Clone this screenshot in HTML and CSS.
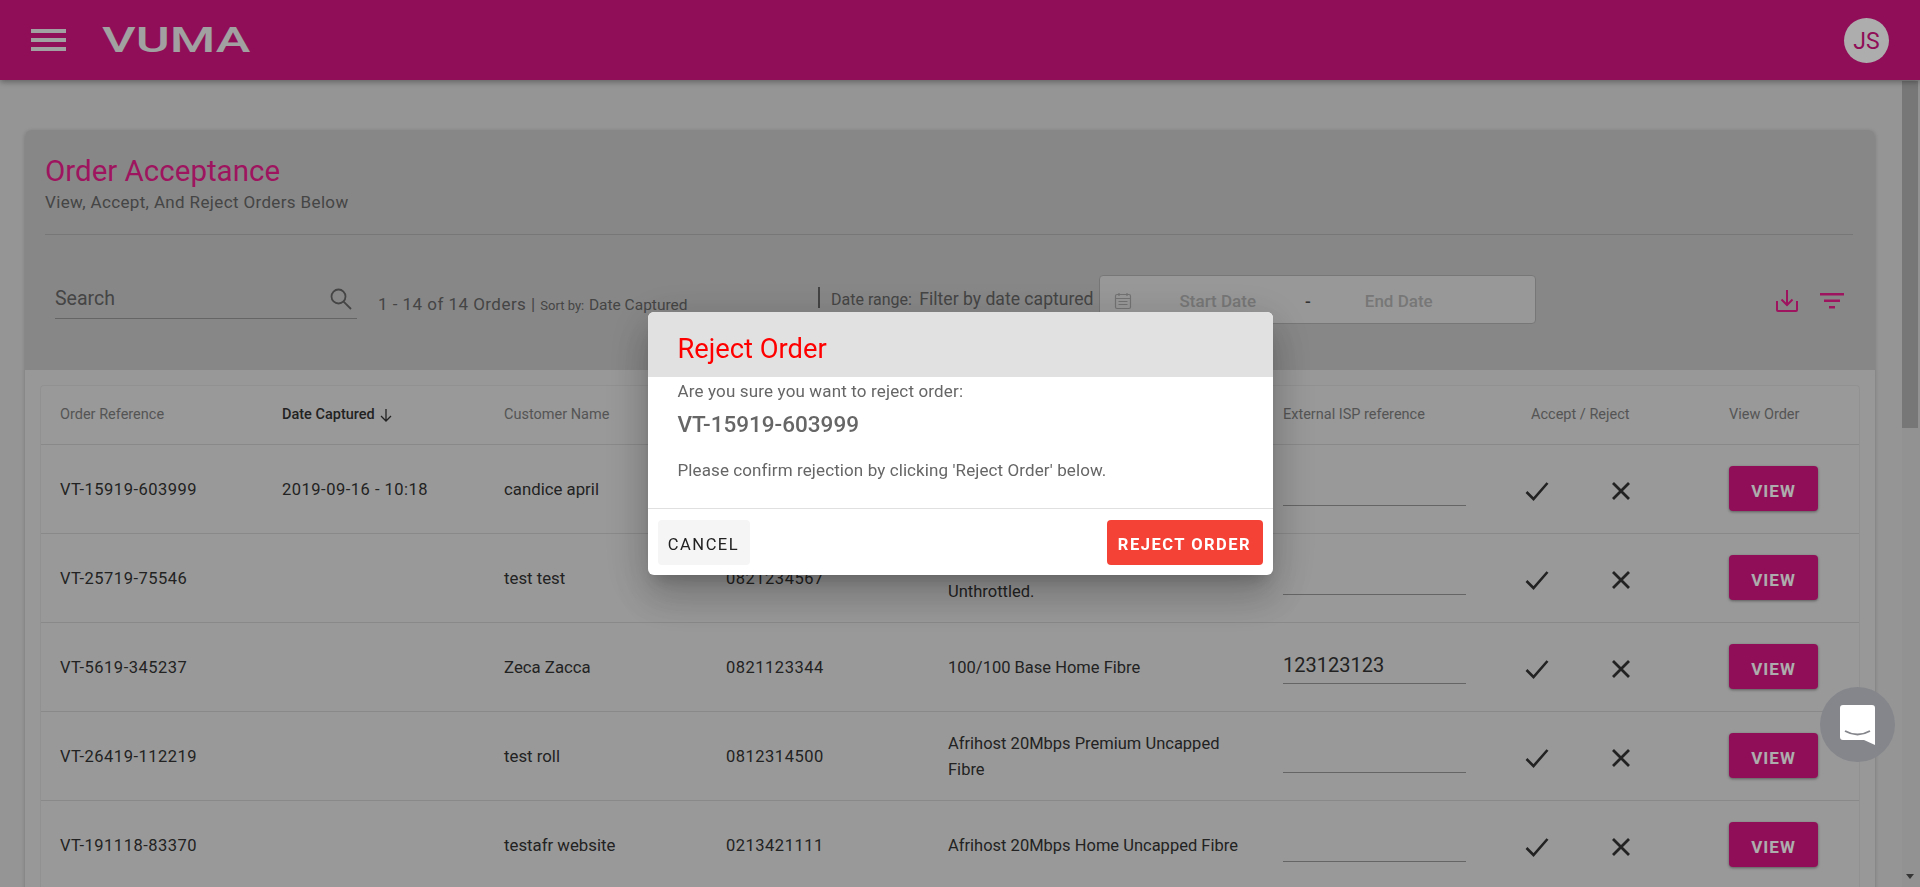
FILE: index.html
```html
<!DOCTYPE html>
<html lang="en">
<head>
    <meta charset="UTF-8">
    <meta name="viewport" content="width=device-width, initial-scale=1.0">
    <title>Order Acceptance</title>
    <link rel="stylesheet" href="styles.css">
</head>
<body>
    <header class="topbar">
        <div class="menu-icon"><span></span><span></span><span></span></div>
        <div class="logo"><span>VUMA</span></div>
        <div class="avatar">JS</div>
    </header>

    <div class="layout">
        <main class="content">
            <section class="card">
                <div class="card-head">
                    <h1>Order Acceptance</h1>
                    <p class="subtitle">View, Accept, And Reject Orders Below</p>
                    <div class="toolbar">
                        <div class="search">
                            <span>Search</span>
                            <svg width="24" height="24" viewBox="0 0 24 24" fill="none" stroke="#666" stroke-width="1.8"><circle cx="9.5" cy="9.5" r="7"/><path d="M14.6 14.6 22 22"/></svg>
                        </div>
                        <div class="count">1 - 14 of 14 Orders | <small>Sort by:</small> <span class="sort">Date Captured</span></div>
                        <div class="range"><small>Date range:</small> <span>Filter by date captured</span></div>
                        <div class="dates">
                            <svg width="18" height="18" viewBox="0 0 18 18" fill="none" stroke="#aaa" stroke-width="1.2"><rect x="1.5" y="2.5" width="15" height="14" rx="1.5"/><path d="M1.5 6.5h15M5 1v3M13 1v3M4.5 9.5h9M4.5 12.5h9"/></svg>
                            <span class="date-start">Start Date</span>
                            <span class="date-dash">-</span>
                            <span class="date-end">End Date</span>
                        </div>
                        <div class="tools">
                            <svg width="24" height="24" viewBox="0 0 24 24" fill="none" stroke="#e91e8c" stroke-width="2"><path d="M12 1v15M6.5 10.500 12 16l5.500-5.500M2 12v9a1 1 0 0 0 1 1h18a1 1 0 0 0 1-1v-9"/></svg>
                            <svg width="24" height="16" viewBox="0 0 24 16" fill="#e91e8c"><rect width="24" height="2.500"/><rect x="4" y="6.500" width="16" height="2.500"/><rect x="9" y="13" width="6" height="2.500"/></svg>
                        </div>
                    </div>
                </div>

                <div class="card-body">
                    <div class="orders">
                        <div class="row row-head">
                            <div>Order Reference</div>
                            <div class="sorted">Date Captured
                                <svg width="16" height="16" viewBox="0 0 16 16" fill="none" stroke="#333" stroke-width="1.300"><path d="M8 2v12M3 9l5 5 5-5"/></svg>
                            </div>
                            <div>Customer Name</div>
                            <div>Contact Number</div>
                            <div>Package</div>
                            <div>External ISP reference</div>
                            <div class="head-accept">Accept / Reject</div>
                            <div>View Order</div>
                        </div>

                        <div class="row">
                            <div class="num">VT-15919-603999</div>
                            <div class="num">2019-09-16 - 10:18</div>
                            <div class="name">candice april</div>
                            <div class="num">0825551234</div>
                            <div class="pkg">Afrihost 20Mbps Home Uncapped Fibre</div>
                            <input class="isp" type="text">
                            <div class="actions">
                                <svg class="tick" width="24" height="20" viewBox="0 0 24 20" fill="none" stroke="#333" stroke-width="2.600"><path d="M1.500 11 8.500 18 22.500 2"/></svg>
                                <svg class="cross" width="20" height="20" viewBox="0 0 20 20" fill="none" stroke="#333" stroke-width="2.800"><path d="M2 2 18 18M18 2 2 18"/></svg>
                            </div>
                            <button class="view">VIEW</button>
                        </div>

                        <div class="row">
                            <div class="num">VT-25719-75546</div>
                            <div></div>
                            <div class="name">test test</div>
                            <div class="num">0821234567</div>
                            <div class="pkg">Afrihost 20Mbps Premium Uncapped Unthrottled.</div>
                            <input class="isp" type="text">
                            <div class="actions">
                                <svg class="tick" width="24" height="20" viewBox="0 0 24 20" fill="none" stroke="#333" stroke-width="2.600"><path d="M1.500 11 8.500 18 22.500 2"/></svg>
                                <svg class="cross" width="20" height="20" viewBox="0 0 20 20" fill="none" stroke="#333" stroke-width="2.800"><path d="M2 2 18 18M18 2 2 18"/></svg>
                            </div>
                            <button class="view">VIEW</button>
                        </div>

                        <div class="row">
                            <div class="num">VT-5619-345237</div>
                            <div></div>
                            <div class="name">Zeca Zacca</div>
                            <div class="num">0821123344</div>
                            <div class="pkg">100/100 Base Home Fibre</div>
                            <input class="isp" type="text" value="123123123">
                            <div class="actions">
                                <svg class="tick" width="24" height="20" viewBox="0 0 24 20" fill="none" stroke="#333" stroke-width="2.600"><path d="M1.500 11 8.500 18 22.500 2"/></svg>
                                <svg class="cross" width="20" height="20" viewBox="0 0 20 20" fill="none" stroke="#333" stroke-width="2.800"><path d="M2 2 18 18M18 2 2 18"/></svg>
                            </div>
                            <button class="view">VIEW</button>
                        </div>

                        <div class="row">
                            <div class="num">VT-26419-112219</div>
                            <div></div>
                            <div class="name">test roll</div>
                            <div class="num">0812314500</div>
                            <div class="pkg">Afrihost 20Mbps Premium Uncapped Fibre</div>
                            <input class="isp" type="text">
                            <div class="actions">
                                <svg class="tick" width="24" height="20" viewBox="0 0 24 20" fill="none" stroke="#333" stroke-width="2.600"><path d="M1.500 11 8.500 18 22.500 2"/></svg>
                                <svg class="cross" width="20" height="20" viewBox="0 0 20 20" fill="none" stroke="#333" stroke-width="2.800"><path d="M2 2 18 18M18 2 2 18"/></svg>
                            </div>
                            <button class="view">VIEW</button>
                        </div>

                        <div class="row">
                            <div class="num">VT-191118-83370</div>
                            <div></div>
                            <div class="name">testafr website</div>
                            <div class="num">0213421111</div>
                            <div class="pkg">Afrihost 20Mbps Home Uncapped Fibre</div>
                            <input class="isp" type="text">
                            <div class="actions">
                                <svg class="tick" width="24" height="20" viewBox="0 0 24 20" fill="none" stroke="#333" stroke-width="2.600"><path d="M1.500 11 8.500 18 22.500 2"/></svg>
                                <svg class="cross" width="20" height="20" viewBox="0 0 20 20" fill="none" stroke="#333" stroke-width="2.800"><path d="M2 2 18 18M18 2 2 18"/></svg>
                            </div>
                            <button class="view">VIEW</button>
                        </div>
                    </div>
                </div>
            </section>
        </main>
        <div class="scrollbar">
            <div class="thumb"></div>
            <div class="arrow"></div>
        </div>
    </div>

    <div class="overlay">
        <div class="dialog">
            <h2>Reject Order</h2>
            <div class="dialog-body">
                <p>Are you sure you want to reject order:</p>
                <p class="dialog-ref">VT-15919-603999</p>
                <p class="dialog-note">Please confirm rejection by clicking 'Reject Order' below.</p>
            </div>
            <div class="dialog-actions">
                <button class="cancel">CANCEL</button>
                <button class="reject">REJECT ORDER</button>
            </div>
        </div>
    </div>

    <div class="chat">
        <svg width="35" height="40" viewBox="0 0 35 40"><path d="M3 0h29a3 3 0 0 1 3 3v37l-11-5H3a3 3 0 0 1-3-3V3a3 3 0 0 1 3-3z" fill="#fff"/><path d="M5 26q12.500 7 25 0" fill="none" stroke="#84868c" stroke-width="1.800"/></svg>
    </div>
</body>
</html>
```

FILE: styles.css
```css
* {
    box-sizing: border-box;
}

body {
    margin: 0;
    height: 100vh;
    overflow: hidden;
    font-family: Roboto, Arial, sans-serif;
    background-color: #dcdcdc;
    color: #333;
}

.topbar {
    position: relative;
    z-index: 2;
    display: flex;
    align-items: center;
    height: 80px;
    padding: 0 31px;
    background-color: #d51582;
    box-shadow: 0 2px 6px rgba(0, 0, 0, 0.35);
}

.menu-icon {
    display: flex;
    flex-direction: column;
    gap: 5px;
    width: 35px;
}

.menu-icon span {
    height: 4px;
    background-color: #eee;
}

.logo {
    width: 148px;
    margin-left: 36px;
    padding-top: 2px;
    color: #eee;
    font-size: 35px;
    font-weight: 500;
    line-height: 40px;
}

.logo span {
    display: inline-block;
    transform: scaleX(1.49);
    transform-origin: left center;
}

.avatar {
    display: flex;
    align-items: center;
    justify-content: center;
    width: 45px;
    height: 45px;
    margin-left: auto;
    padding-top: 3px;
    border-radius: 50%;
    background-color: #fff;
    color: #d51582;
    font-size: 23px;
}

.layout {
    display: flex;
    height: calc(100vh - 80px);
}

.content {
    flex: 1;
    min-width: 0;
    overflow: hidden;
    padding: 50px 27px 0 25px;
}

.card {
    border-radius: 6px;
    box-shadow: 0 1px 4px rgba(0, 0, 0, 0.2);
}

.card-head {
    height: 240px;
    padding: 22px 22px 0 20px;
    border-radius: 6px 6px 0 0;
    background-color: #c8c8c8;
}

h1 {
    margin: 0;
    color: #e91e8c;
    font-size: 29.5px;
    font-weight: 400;
    line-height: 38px;
}

.subtitle {
    margin: 1px 0 0;
    padding-bottom: 21px;
    border-bottom: 1px solid #b0b0b0;
    color: #666;
    font-size: 17px;
    letter-spacing: 0.36px;
    line-height: 22px;
}

.toolbar {
    display: flex;
    align-items: flex-start;
    height: 49px;
    margin-top: 40px;
}

.search {
    display: flex;
    align-items: center;
    justify-content: space-between;
    width: 302px;
    height: 44px;
    margin-left: 10px;
    padding: 4px 4px 0 0;
    border-bottom: 1px solid #969696;
    color: #666;
    font-size: 19.5px;
}

.count {
    width: 440px;
    margin: 19px 0 0 21px;
    color: #666;
    font-size: 17px;
    letter-spacing: 0.46px;
    line-height: 20px;
    white-space: nowrap;
}

small {
    font-size: 13px;
    letter-spacing: 0;
}

.sort {
    font-size: 15.5px;
    letter-spacing: 0;
}

.range {
    height: 21px;
    margin-top: 12px;
    padding-left: 11px;
    border-left: 2px solid #646464;
    color: #666;
    font-size: 17.6px;
    line-height: 24px;
    white-space: nowrap;
}

.range small {
    font-size: 16px;
    margin-right: 3px;
}

.dates {
    display: flex;
    align-items: center;
    width: 437px;
    height: 49px;
    margin-left: 5px;
    padding: 2px 0 0 14px;
    border: 1px solid #b0b0b0;
    border-radius: 4px;
    background-color: #e1e1e1;
    color: #b0b0b0;
    font-size: 17px;
    font-weight: 500;
}

.date-start {
    margin-left: 48px;
}

.date-dash {
    margin-left: 49px;
    color: #4a4a4a;
}

.date-end {
    margin-left: 54px;
}

.tools {
    display: flex;
    align-items: center;
    gap: 21px;
    margin: 14px 9px 0 auto;
}

.card-body {
    height: 600px;
    padding: 15px 15px 0;
    background-color: #e1e1e1;
}

.orders {
    border: 1px solid #d6d6d6;
    border-bottom: none;
    border-radius: 4px 4px 0 0;
    background-color: #e2e2e2;
}

.row {
    display: grid;
    grid-template-columns: 222px 222px 222px 222px 335px 236px 210px 89px;
    align-items: center;
    height: 89px;
    padding-left: 19px;
    border-bottom: 1px solid #cbcbcb;
    font-size: 16.5px;
    line-height: 26px;
}

.row > div {
    padding-top: 2px;
}

.row .num {
    letter-spacing: 0.5px;
}

.row .name {
    padding-top: 0;
    font-size: 16.8px;
}

.row .pkg {
    max-width: 305px;
}

.row-head {
    height: 59px;
    color: #7d7d7d;
    font-size: 14.5px;
}

.row-head > div {
    padding-top: 0;
}

.sorted {
    display: flex;
    align-items: center;
    gap: 3px;
    color: #333;
    font-weight: 500;
}

.head-accept {
    margin-left: 12px;
}

.isp {
    align-self: end;
    width: 183px;
    height: 36px;
    margin-bottom: 27px;
    padding: 0 0 2px;
    border: none;
    border-bottom: 1px solid #969696;
    background: transparent;
    color: #333;
    font-family: inherit;
    font-size: 20px;
}

.actions {
    display: flex;
    align-items: center;
    gap: 62px;
    margin: 2px 0 0 6px;
}

.view {
    width: 89px;
    height: 45px;
    margin-bottom: 1px;
    padding-top: 5px;
    border: none;
    border-radius: 4px;
    background-color: #d51582;
    box-shadow: 0 1px 3px rgba(0, 0, 0, 0.4);
    color: #fff;
    font-family: inherit;
    font-size: 17px;
    font-weight: 700;
    letter-spacing: 1px;
}

.scrollbar {
    position: relative;
    width: 18px;
    background-color: #d8d8d8;
}

.thumb {
    width: 16px;
    height: 347px;
    margin-top: 1px;
    background-color: #b0b0b0;
}

.arrow {
    position: absolute;
    left: 4px;
    bottom: 8px;
    border-top: 5px solid #505050;
    border-left: 4px solid transparent;
    border-right: 4px solid transparent;
}

.overlay {
    position: fixed;
    inset: 0;
    z-index: 10;
    display: flex;
    align-items: center;
    justify-content: center;
    background-color: rgba(0, 0, 0, 0.32);
}

.dialog {
    width: 625px;
    height: 263px;
    overflow: hidden;
    border-radius: 6px;
    background-color: #fff;
    box-shadow: 0 11px 15px -7px rgba(0, 0, 0, 0.2), 0 24px 38px 3px rgba(0, 0, 0, 0.14), 0 9px 46px 8px rgba(0, 0, 0, 0.12);
}

h2 {
    margin: 0;
    height: 65px;
    padding: 21px 30px 0;
    background-color: #e1e1e1;
    color: #f00;
    font-size: 27.3px;
    font-weight: 400;
    line-height: 32px;
}

.dialog-body {
    height: 132px;
    padding: 3px 30px 0;
    border-bottom: 1px solid #e0e0e0;
    color: #666;
    font-size: 17px;
    letter-spacing: 0.15px;
    line-height: 22px;
}

.dialog-body p {
    margin: 0;
}

.dialog-body .dialog-ref {
    margin-top: 6px;
    font-size: 22.5px;
    font-weight: 500;
    letter-spacing: 0;
    line-height: 32px;
}

.dialog-body .dialog-note {
    margin-top: 19px;
    letter-spacing: 0.1px;
}

.dialog-actions {
    display: flex;
    justify-content: space-between;
    padding: 11px 10px 0 10px;
}

.dialog-actions button {
    height: 45px;
    padding-top: 4px;
    border: none;
    border-radius: 4px;
    font-family: inherit;
    font-size: 16.5px;
    letter-spacing: 1.5px;
}

.cancel {
    width: 92px;
    background-color: #f5f5f5;
    color: #222;
}

.dialog-actions .reject {
    width: 156px;
    background-color: #f44336;
    color: #fff;
    font-weight: 700;
}

.chat {
    position: fixed;
    right: 25px;
    bottom: 125px;
    z-index: 20;
    display: flex;
    align-items: center;
    justify-content: center;
    width: 75px;
    height: 75px;
    border-radius: 50%;
    background-color: #84868c;
}
```
